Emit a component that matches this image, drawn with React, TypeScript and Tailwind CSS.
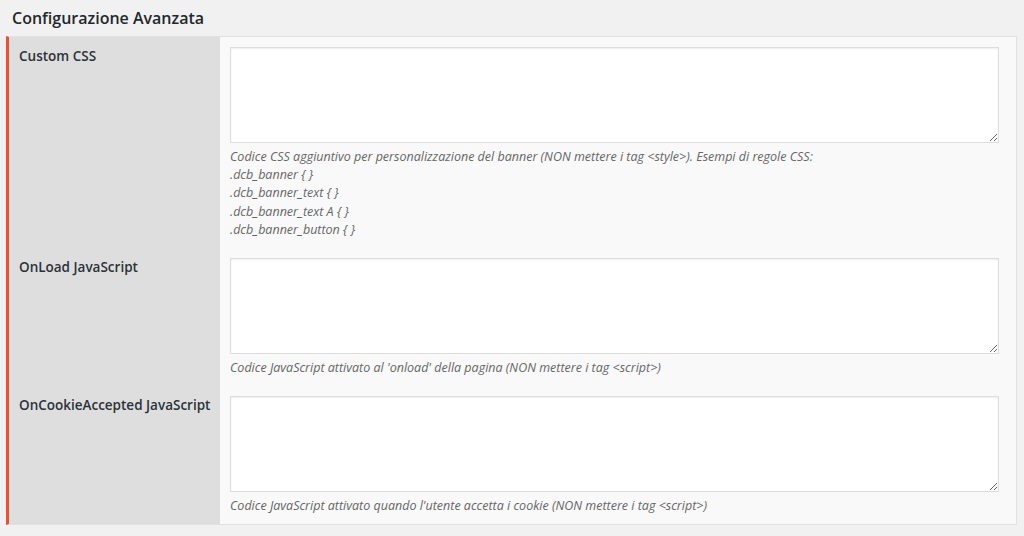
import React from "react";

const font = { fontFamily: '"Open Sans", "Noto Sans", sans-serif' };

function Row({ label, desc }: { label: string; desc: React.ReactNode }) {
  return (
    <div className="flex">
      <div className="w-[211px] shrink-0 bg-[#dedede] pl-[10px] pr-2 pt-[10px] text-[13.5px] leading-[18px] font-semibold text-[#2b3238]">
        {label}
      </div>
      <div className="flex-1 pl-[10px] pr-[17px] pt-[10px] pb-[9px]">
        <textarea className="block w-full h-[96px] bg-white border border-[#dddddd] shadow-[inset_0_1px_2px_rgba(0,0,0,0.07)] outline-none resize-y" />
        <div className="mt-[5px] text-[12.5px] leading-[18.2px] italic text-[#666]">{desc}</div>
      </div>
    </div>
  );
}

export default function App() {
  return (
    <div className="w-[1024px] h-[536px] bg-[#f1f1f1] overflow-hidden" style={font}>
      <h2 className="pl-[12px] pt-[7px] h-[36px] text-[16px] leading-[22px] font-semibold text-[#23282d]">
        Configurazione Avanzata
      </h2>
      <div className="ml-[6px] w-[1011px] border border-[#e1e1e1] border-l-[3px] border-l-[#f0502a] bg-[#f9f9f9]">
        <Row
          label="Custom CSS"
          desc={
            <>
              <div>Codice CSS aggiuntivo per personalizzazione del banner (NON mettere i tag &lt;style&gt;). Esempi di regole CSS:</div>
              <div>.dcb_banner {"{ }"}</div>
              <div>.dcb_banner_text {"{ }"}</div>
              <div>.dcb_banner_text A {"{ }"}</div>
              <div>.dcb_banner_button {"{ }"}</div>
            </>
          }
        />
        <Row
          label="OnLoad JavaScript"
          desc={<div>Codice JavaScript attivato al 'onload' della pagina (NON mettere i tag &lt;script&gt;)</div>}
        />
        <Row
          label="OnCookieAccepted JavaScript"
          desc={<div>Codice JavaScript attivato quando l'utente accetta i cookie (NON mettere i tag &lt;script&gt;)</div>}
        />
      </div>
    </div>
  );
}
